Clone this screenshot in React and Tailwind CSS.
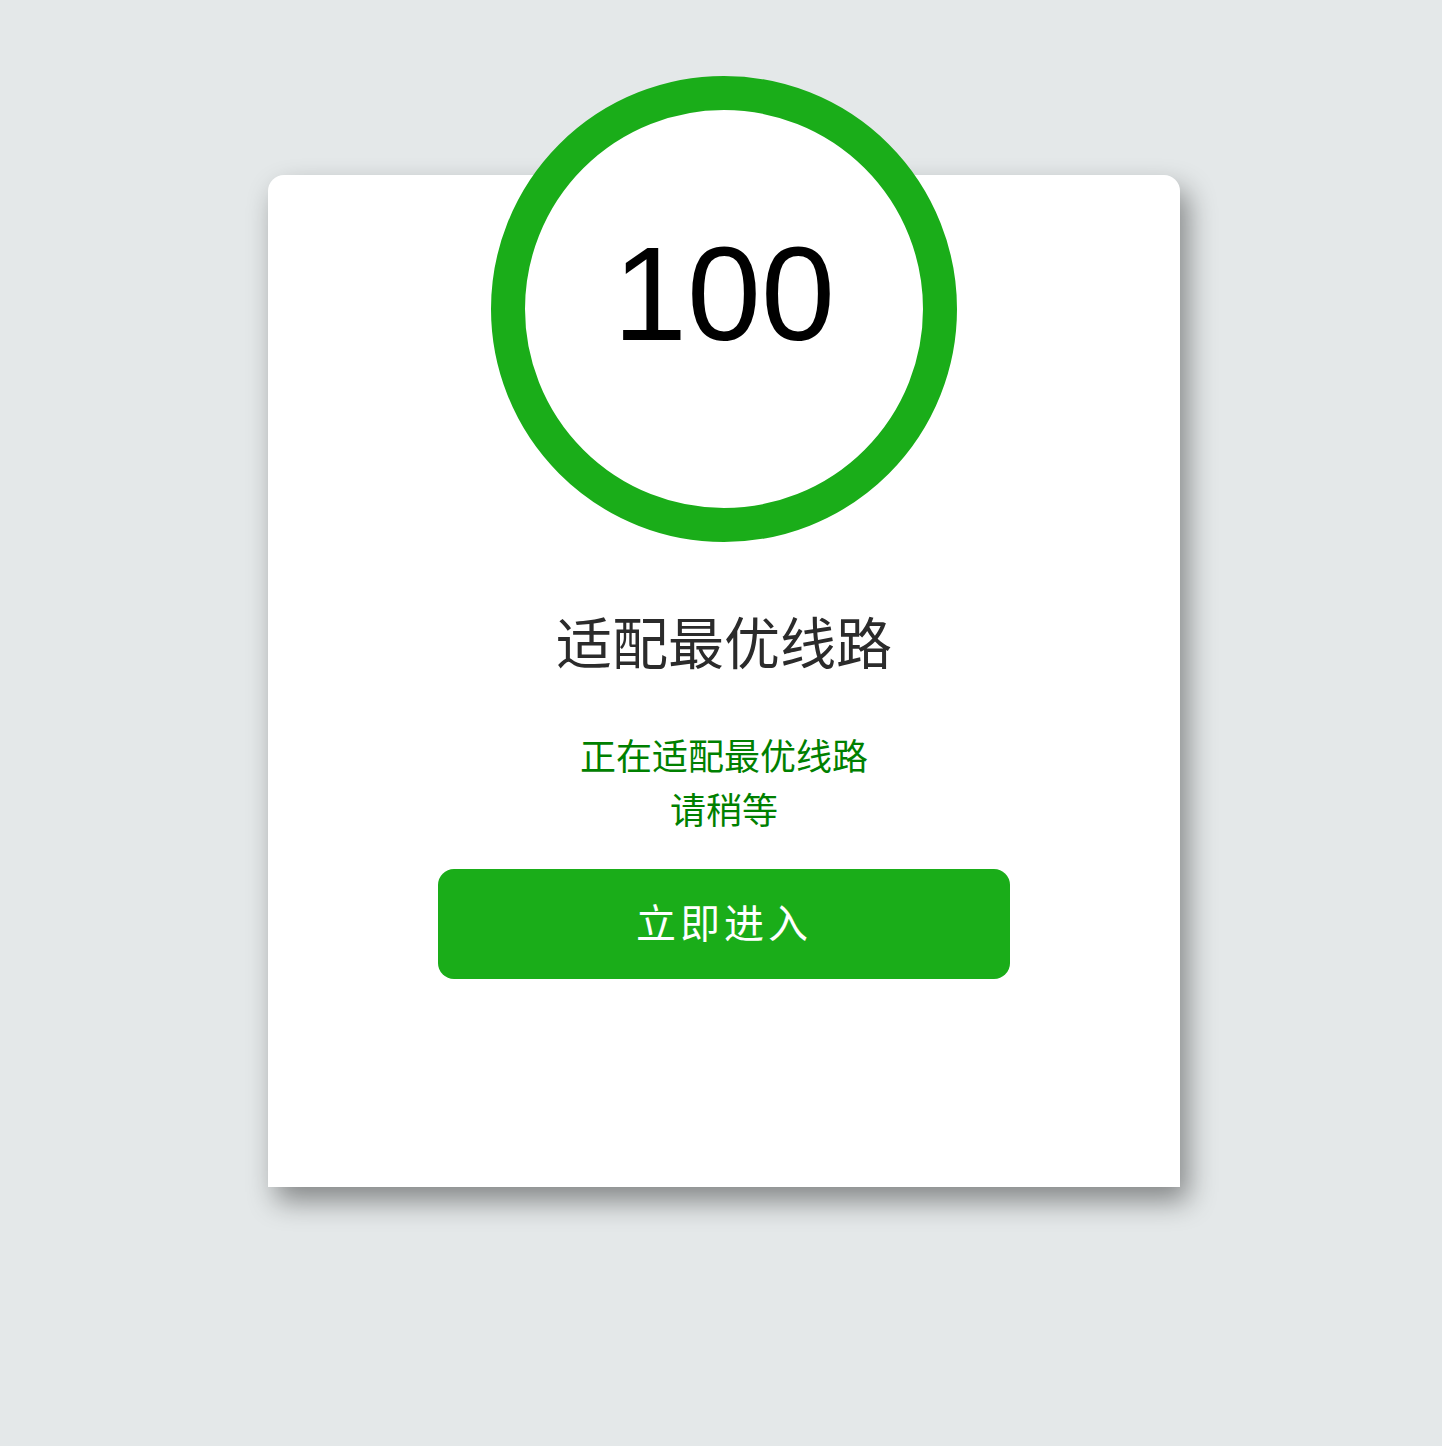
import React from "react";

const cjk = "font-['Liberation_Sans','Noto_Sans_CJK_SC',sans-serif]";

const App = () => {
  return (
    <div className="min-h-[1446px] w-full bg-[#e4e8e9] flex justify-center pl-[6px] pt-[175px]">
      <div className="w-[912px] h-[1012px] bg-white rounded-t-[16px] shadow-[8px_14px_28px_rgba(0,0,0,0.42)] flex flex-col items-center">
        {/* score ring */}
        <div className="mt-[-99px] w-[466px] h-[466px] shrink-0 rounded-full border-[34px] border-[#1aad19] bg-white flex flex-col items-center">
          <span className="pt-[118px] text-[133px] leading-none text-black font-['Liberation_Sans',Arial,sans-serif]">
            100
          </span>
        </div>

        <h1 className={`mt-[75px] text-[56px] leading-none text-[#2b2b2b] ${cjk}`}>
          适配最优线路
        </h1>

        <p className={`mt-[58px] text-[36px] leading-[54px] text-[#008000] text-center ${cjk}`}>
          正在适配最优线路
          <br />
          请稍等
        </p>

        <button className={`mt-[30px] w-[572px] h-[110px] rounded-[16px] bg-[#1aad19] text-white text-[40px] tracking-[4px] flex items-center justify-center ${cjk}`}>
          立即进入
        </button>
      </div>
    </div>
  );
};

export default App;
